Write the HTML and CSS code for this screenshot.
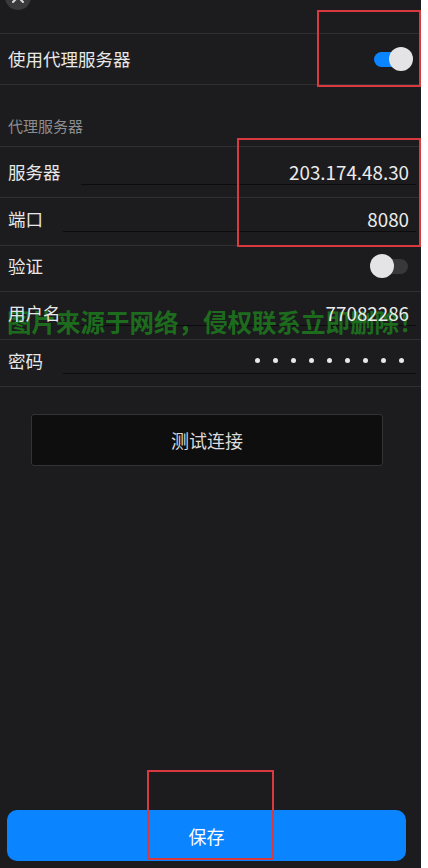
FILE: index.html
```html
<!DOCTYPE html>
<html lang="zh-CN">
<head>
<meta charset="utf-8">
<title>代理服务器</title>
<link rel="stylesheet" href="styles.css">
</head>
<body>
<div class="app">
  <div class="watermark">图片来源于网络，侵权联系立即删除！</div>
  <div class="topbar">
    <div class="close-btn">
      <svg width="26" height="26" viewBox="0 0 26 26"><path d="M8 8 L18 18 M18 8 L8 18" stroke="#d8d8d8" stroke-width="2" stroke-linecap="round"/></svg>
    </div>
  </div>
  <div class="row row-main">
    <span class="label">使用代理服务器</span>
    <span class="switch on"><span class="track"></span><span class="knob"></span></span>
  </div>
  <div class="section-header">代理服务器</div>
  <div class="row row-a">
    <span class="label">服务器</span>
    <span class="field"><span class="value">203.174.48.30</span></span>
  </div>
  <div class="row row-b">
    <span class="label">端口</span>
    <span class="field"><span class="value">8080</span></span>
  </div>
  <div class="row row-c">
    <span class="label">验证</span>
    <span class="switch off"><span class="track"></span><span class="knob"></span></span>
  </div>
  <div class="row row-b">
    <span class="label">用户名</span>
    <span class="field"><span class="value">77082286</span></span>
  </div>
  <div class="row row-d">
    <span class="label">密码</span>
    <span class="field"><span class="dots"><i></i><i></i><i></i><i></i><i></i><i></i><i></i><i></i><i></i></span></span>
  </div>
  <button class="test-btn">测试连接</button>
  <button class="save-btn">保存</button>

  <div class="mark mark-1"></div>
  <div class="mark mark-2"></div>
  <div class="mark mark-3"></div>
</div>
</body>
</html>
```
FILE: styles.css
```css
* { box-sizing: border-box; }
html, body { margin: 0; padding: 0; }
body {
  background: #ffffff;
  width: 428px;
  height: 868px;
  overflow: hidden;
  font-family: "Noto Sans CJK SC", "Noto Sans", sans-serif;
}
.app {
  position: relative;
  width: 421px;
  height: 868px;
  background: #1c1c1e;
  display: flex;
  flex-direction: column;
  color: #e6e6e6;
}
.topbar {
  height: 34px;
  border-bottom: 1px solid #2f2f31;
  padding-left: 5px;
  flex-shrink: 0;
}
.close-btn {
  width: 26px;
  height: 26px;
  border-radius: 50%;
  background: #3a3a3c;
  margin-top: -16px;
}
.close-btn svg { display: block; }
.row {
  display: flex;
  align-items: center;
  padding: 0 5px 0 8px;
  border-bottom: 1px solid #2f2f31;
  flex-shrink: 0;
}
.row-main { height: 51px; }
.row-a { height: 51px; }
.row-b { height: 48px; padding-bottom: 5px; }
.row-c { height: 46px; padding-bottom: 5px; }
.row-d { height: 47px; padding-bottom: 5px; }
.label {
  position: relative;
  z-index: 2;
  font-size: 17.5px;
  line-height: 24px;
  color: #e8e8e8;
  white-space: nowrap;
}
.section-header {
  height: 62px;
  display: flex;
  align-items: flex-end;
  padding: 0 0 9px 8px;
  font-size: 15px;
  line-height: 22px;
  color: #8c8c90;
  border-bottom: 1px solid #2f2f31;
  flex-shrink: 0;
}
.field {
  flex: 1;
  margin-left: 20px;
  height: 26px;
  border-bottom: 1px solid #0c0c0c;
  display: flex;
  align-items: center;
  justify-content: flex-end;
  padding-right: 7px;
}
.value {
  position: relative;
  z-index: 2;
  font-size: 18.8px;
  line-height: 24px;
  color: #ececec;
}
.dots {
  display: flex;
  gap: 13px;
  padding-right: 5px;
}
.dots i {
  display: block;
  width: 5px;
  height: 5px;
  border-radius: 50%;
  background: #e8e8e8;
}
.switch {
  margin-left: auto;
  position: relative;
  width: 43px;
  height: 24px;
  flex-shrink: 0;
  margin-right: 3px;
}
.switch .track {
  position: absolute;
  top: 4.5px;
  height: 15px;
  border-radius: 8px;
}
.switch .knob {
  position: absolute;
  top: 0;
  width: 24px;
  height: 24px;
  border-radius: 50%;
  background: #e4e4e6;
}
.switch.on .track { left: 4px; right: 4px; background: #0a84ff; }
.switch.on .knob { right: 0; }
.switch.off .track { left: 4px; right: 5px; background: #38383a; }
.switch.off .knob { left: 0; }
.test-btn {
  align-self: flex-start;
  margin: 27px 0 0 31px;
  width: 352px;
  height: 52px;
  background: #0e0e0f;
  border: 1px solid #333335;
  border-radius: 3px;
  color: #dcdcdc;
  font-family: inherit;
  font-size: 18px;
  flex-shrink: 0;
}
.save-btn {
  margin: auto 15px 7px 7px;
  height: 51px;
  background: #0a84ff;
  border: none;
  border-radius: 10px;
  color: #ffffff;
  font-family: inherit;
  font-size: 18px;
  flex-shrink: 0;
}
.watermark {
  position: absolute;
  z-index: 1;
  left: 7px;
  top: 306px;
  font-size: 24.5px;
  line-height: 32px;
  font-weight: 700;
  color: rgba(30, 140, 30, 0.72);
  white-space: nowrap;
  pointer-events: none;
}
.mark {
  position: absolute;
  z-index: 3;
  border: 2px solid #d83a40;
  pointer-events: none;
}
.mark-1 { left: 317px; top: 10px; width: 104px; height: 77px; }
.mark-2 { left: 237px; top: 138px; width: 184px; height: 109px; }
.mark-3 { left: 147px; top: 770px; width: 127px; height: 90px; }
```
